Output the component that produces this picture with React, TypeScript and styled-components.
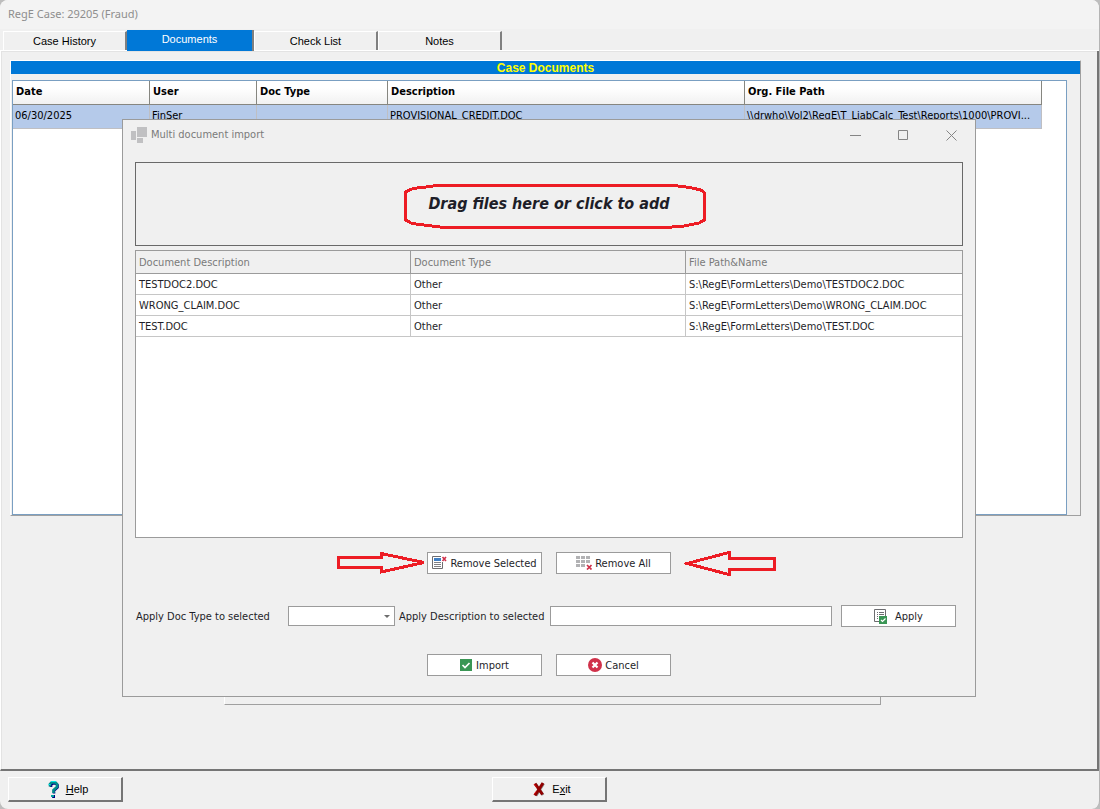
import React from "react";
import styled, { createGlobalStyle, css } from "styled-components";

const ui = `"DejaVu Sans Condensed", "DejaVu Sans", Tahoma, sans-serif`;
const caption = `"Noto Sans", "Open Sans", sans-serif`;
const classic = `"Liberation Sans", Arial, sans-serif`;

const GlobalStyle = createGlobalStyle`
  *, *::before, *::after { box-sizing: border-box; }
  body { margin: 0; background: #bdbdbd; font-family: ${ui}; font-size: 11px; color: #000; }
  button, input, select { font: inherit; color: inherit; margin: 0; }
`;

const Window = styled.div`
  position: relative;
  display: flex;
  flex-direction: column;
  min-height: 100vh;
  background: #f0f0f0;
  border-right: 1px solid #b4b4b4;
  border-radius: 8px;
  overflow: hidden;
`;

const TitleBar = styled.header`
  height: 29px;
  padding: 0 8px;
  background: #f3f3f3;
  font: 11px/28px ${caption};
  color: #8e8e8e;
`;

const Tabs = styled.nav`
  display: flex;
  align-items: flex-end;
  height: 22px;
  padding-left: 3px;
  border-bottom: 1px solid #fff;
`;

const Tab = styled.button<{ $active?: boolean }>`
  width: 124px;
  height: 19px;
  padding: 0;
  border: 0;
  border-top: 1px solid #fff;
  border-left: 1px solid #fff;
  border-right: 2px solid #808080;
  background: #f0f0f0;
  font: 11px/17px ${classic};
  ${(p) =>
    p.$active &&
    css`
      width: 127px;
      height: 21px;
      border-top: 0;
      border-left: 0;
      background: #0078d7;
      color: #fff;
      margin-bottom: -1px;
      padding-bottom: 3px;
    `}
`;

const Page = styled.main`
  flex: 1;
  padding: 9px 16px 20px 9px;
  border-left: 1px solid #fff;
  border-right: 2px solid #757575;
  border-bottom: 2px solid #757575;
  box-shadow: inset 1px 1px #e3e3e3;
`;

const DocumentsPanel = styled.section`
  border: 1px solid #a0a0a0;
  border-top-color: #fff;
  border-left-color: #fff;
`;

const PanelTitle = styled.h1`
  height: 13px;
  margin: 0 0 6px;
  background: #0078d7;
  color: #ff0;
  text-align: center;
  font: bold 12px/15px ${classic};
`;

const GridFrame = styled.div`
  min-height: 435px;
  margin: 0 13px 0 1px;
  border: 1px solid #7a9fc2;
  background: #fff;
`;

const CaseTable = styled.table`
  width: calc(100% - 24px);
  table-layout: fixed;
  border-collapse: separate;
  border-spacing: 0;

  th, td {
    overflow: hidden;
    text-align: left;
    text-overflow: ellipsis;
    white-space: nowrap;
    padding: 0 2px;
  }
  th {
    height: 24px;
    padding: 0 3px 3px;
    border-right: 1px solid #868680;
    border-bottom: 1px solid #868680;
    background: linear-gradient(#fff 30%, #f1f1f1);
  }
  td {
    height: 24px;
    padding-bottom: 2px;
    border-right: 1px solid #bfbfc3;
    border-bottom: 1px solid #bfbfc3;
    background: #b5caea;
  }
`;

const LowerArea = styled.div`
  padding-left: 13px;
`;

const LowerPanel = styled.section`
  width: 657px;
  max-width: 100%;
  height: 184px;
  margin: 5px auto 0;
  border: 1px solid #a0a0a0;
  border-top-color: #fff;
  border-left-color: #fff;
`;

const Footer = styled.footer`
  display: grid;
  grid-template-columns: 1fr auto 1fr;
  padding: 6px 8px 7px;
`;

const BevelButton = styled.button`
  display: flex;
  align-items: center;
  justify-content: center;
  gap: 7px;
  width: 115px;
  height: 25px;
  padding: 0 0 0 6px;
  border: 1px solid #fff;
  border-right: 2px solid #757575;
  border-bottom: 2px solid #757575;
  background: #f0f0f0;
  font: 11px/16px ${classic};
`;

const Overlay = styled.div`
  position: absolute;
  top: 119px;
  left: 122px;
  right: 123px;
`;

const Dialog = styled.div`
  padding: 0 12px 20px;
  border: 1px solid #9b9b9b;
  background: #f0f0f0;
  color: #1e1e28;
`;

const DialogBar = styled.div`
  display: flex;
  align-items: center;
  height: 30px;
  margin: 0 -12px 12px;
  padding-left: 8px;
  color: #7a7a7a;
`;

const DialogTitle = styled.h2`
  flex: 1;
  margin: 0 0 0 4px;
  font: 11px/16px ${ui};
`;

const CaptionButton = styled.button`
  display: grid;
  place-items: center;
  width: 48px;
  height: 28px;
  padding: 0;
  border: 0;
  background: none;
`;

const DropZone = styled.button`
  display: grid;
  place-items: center;
  width: 100%;
  height: 84px;
  padding: 0;
  border: 1px solid #696969;
  background: #f0f0f0;
  font: italic bold 16px/22px ${ui};
`;

const Circled = styled.span`
  position: relative;

  svg {
    position: absolute;
    top: 50%;
    left: 50%;
    transform: translate(-145px, -20px);
  }
`;

const ImportGrid = styled.div`
  height: 288px;
  margin-top: 4px;
  border: 1px solid #9b9b9b;
  background: #fff;
`;

const ImportTable = styled.table`
  width: 100%;
  table-layout: fixed;
  border-collapse: separate;
  border-spacing: 0;

  th, td {
    height: 21px;
    padding: 0 3px;
    text-align: left;
    font-weight: normal;
    white-space: nowrap;
    border-right: 1px solid #c6c6c6;
    border-bottom: 1px solid #c6c6c6;
  }
  th {
    height: 23px;
    border-color: #9b9b9b;
    background: #f0f0f0;
    color: #7a7a7a;
  }
  th:last-child, td:last-child { border-right: 0; }
`;

const RemoveRow = styled.div`
  display: grid;
  grid-template-columns: 1fr auto 1fr;
  align-items: center;
  margin-top: 12px;

  > :first-child { justify-self: end; margin-right: 1px; }
  > :last-child { margin-left: 13px; }
`;

const ButtonPair = styled.div`
  display: flex;
  justify-content: center;
  gap: 14px;
`;

const FlatButton = styled.button<{ $gap?: number }>`
  display: flex;
  flex: none;
  align-items: center;
  justify-content: center;
  gap: ${(p) => p.$gap ?? 3}px;
  width: 115px;
  height: 22px;
  padding: 0;
  border: 1px solid #9b9b9b;
  background: #fff;
  white-space: nowrap;
`;

const ApplyRow = styled.div`
  display: grid;
  grid-template-columns: 152px 107px 155px 1fr 115px;
  align-items: center;
  margin: 29px 7px 27px 1px;
`;

const TypeSelect = styled.div`
  display: grid;
  align-items: center;

  > * { grid-area: 1 / 1; }
  svg { justify-self: end; margin-right: 5px; pointer-events: none; }
`;

const Select = styled.select`
  width: 100%;
  height: 20px;
  border: 1px solid #9b9b9b;
  border-radius: 0;
  background: #fff;
  appearance: none;
`;

const FieldLabel = styled.label`
  white-space: nowrap;
`;

const DescriptionLabel = styled(FieldLabel)`
  padding-left: 4px;
`;

const TextInput = styled.input`
  width: auto;
  min-width: 0;
  height: 20px;
  margin-right: 9px;
  padding: 0 3px;
  border: 1px solid #9b9b9b;
  background: #fff;
`;

const caseColumns = ["Date", "User", "Doc Type", "Description", "Org. File Path"];
const files = ["TESTDOC2.DOC", "WRONG_CLAIM.DOC", "TEST.DOC"];

const FormIcon = () => (
  <svg width="16" height="16" viewBox="0 0 16 16" fill="#c0c0c2" aria-hidden>
    <path d="M0 4h5v9H0zM6 0h10v10H6zM6 11h6v5H6z" />
  </svg>
);

const RemoveSelectedIcon = () => (
  <svg width="15" height="14" viewBox="0 0 15 14" fill="none" aria-hidden>
    <path d="M9 .5H.5v12H10.500V6" stroke="#6d6d70" />
    <path d="M2 2h7v3H2z" fill="#3f7fc4" />
    <path d="M2 6.500h7M2 8.500h7M2 10.500h7" stroke="#808084" />
    <path d="M10.500 1l3.500 4M14 1l-3.500 4" stroke="#d0314a" strokeWidth="1.600" />
  </svg>
);

const RemoveAllIcon = () => (
  <svg width="16" height="14" viewBox="0 0 16 14" aria-hidden>
    <path
      d="M0 0h4v3H0zM5 0h4v3H5zM10 0h4v3h-4zM0 4h4v3H0zM5 4h4v3H5zM10 4h4v3h-4zM0 8h4v3H0zM5 8h4v3H5z"
      fill="#b2b2b4"
    />
    <path d="M11 9l4.500 4.500M15.500 9L11 13.500" stroke="#d0314a" strokeWidth="1.700" />
  </svg>
);

const ApplyIcon = () => (
  <svg width="13" height="15" viewBox="0 0 13 15" fill="none" aria-hidden>
    <path d="M5 12.500H.5V.5h11V7" stroke="#6d6d70" />
    <path d="M3 3.500h1M5 3.500h5M3 5.500h1M5 5.500h5M3 7.500h1M3 9.500h1" stroke="#6d6d70" />
    <path d="M5 7h8v8H5z" fill="#3a9655" />
    <path d="M7 11l1.500 1.500L11.500 9.500" stroke="#fff" strokeWidth="1.200" />
  </svg>
);

const ImportIcon = () => (
  <svg width="12" height="12" viewBox="0 0 12 12" fill="none" aria-hidden>
    <path d="M0 0h12v12H0z" fill="#3a9655" />
    <path d="M2.500 6l2.500 2.500L9.500 4" stroke="#fff" strokeWidth="1.700" />
  </svg>
);

const CancelIcon = () => (
  <svg width="14" height="14" viewBox="0 0 14 14" aria-hidden>
    <circle cx="7" cy="7" r="7" fill="#d0314a" />
    <path d="M4.500 4.500l5 5M9.500 4.500l-5 5" stroke="#fff" strokeWidth="2.200" />
  </svg>
);

const HelpIcon = () => (
  <svg width="11" height="17" viewBox="0 0 11 17" fill="none" aria-hidden>
    <path d="M3 6V4L4.500 2.500h3.500L9.500 4v2.500L6 9.500v3" stroke="#000080" strokeWidth="2.600" />
    <path d="M2 5.500V3L3.500 1.500h4L9 3v3L5.500 9v3" stroke="#008c8c" strokeWidth="2.600" />
    <path d="M3 .5h5M.5 3.500h2" stroke="#00e5e5" />
    <path d="M5 14h2v3H4z" fill="#000080" />
    <path d="M3 14h3v2H3z" fill="#00a0a0" />
  </svg>
);

const ExitIcon = () => (
  <svg width="12" height="15" viewBox="0 0 12 15" fill="none" aria-hidden>
    <path d="M2.500 2l7.500 11M10.500 1.500L3 13.500" stroke="#8a8a8a" strokeWidth="3" />
    <path d="M2 1.500l7.500 11M10 1L2 13.500" stroke="#900000" strokeWidth="3" />
    <path d="M1 2l2.500 3.500M1 12.500L3 9.500" stroke="#e01010" />
  </svg>
);

const RingMark = () => (
  <svg width="303" height="46" viewBox="0 0 303 46" fill="none" shapeRendering="crispEdges" aria-hidden>
    <path
      d="M33 1.500H270L286 3.500 297 6 300.500 9V36L295 39 280 42 262 43.500H40L20 41 8 39.500 1.500 36V8L9 4.500 22 3Z"
      stroke="#ed1c24"
      strokeWidth="3"
    />
  </svg>
);

const RightArrow = () => (
  <svg width="89" height="22" viewBox="0 0 89 22" fill="none" shapeRendering="crispEdges" aria-hidden>
    <path d="M1.500 5.500H44V1.500L87 10.500 44 20V15.500H1.500Z" stroke="#ed1c24" strokeWidth="3" />
  </svg>
);

const LeftArrow = () => (
  <svg width="92" height="26" viewBox="0 0 92 26" fill="none" shapeRendering="crispEdges" aria-hidden>
    <path d="M90.500 8.500H45V2.500L3 13.500 45 24.500V19.500H90.500Z" stroke="#ed1c24" strokeWidth="3" />
  </svg>
);

export default function App() {
  return (
    <>
      <GlobalStyle />
      <Window>
        <TitleBar>RegE Case: 29205 (Fraud)</TitleBar>
        <Tabs>
          <Tab>Case History</Tab>
          <Tab $active>Documents</Tab>
          <Tab>Check List</Tab>
          <Tab>Notes</Tab>
        </Tabs>
        <Page>
          <DocumentsPanel>
            <PanelTitle>Case Documents</PanelTitle>
            <GridFrame>
              <CaseTable>
                <colgroup>
                  <col width="137" />
                  <col width="107" />
                  <col width="131" />
                  <col />
                  <col width="297" />
                </colgroup>
                <thead>
                  <tr>
                    {caseColumns.map((name) => (
                      <th key={name}>{name}</th>
                    ))}
                  </tr>
                </thead>
                <tbody>
                  <tr>
                    <td>06/30/2025</td>
                    <td>FinSer</td>
                    <td></td>
                    <td>PROVISIONAL_CREDIT.DOC</td>
                    <td>{"\\\\drwho\\Vol2\\RegE\\T_LiabCalc_Test\\Reports\\1000\\PROVI..."}</td>
                  </tr>
                </tbody>
              </CaseTable>
            </GridFrame>
          </DocumentsPanel>
          <LowerArea>
            <LowerPanel />
          </LowerArea>
        </Page>
        <Footer>
          <BevelButton>
            <HelpIcon />
            <span><u>H</u>elp</span>
          </BevelButton>
          <BevelButton>
            <ExitIcon />
            <span>E<u>x</u>it</span>
          </BevelButton>
        </Footer>

        <Overlay>
          <Dialog role="dialog" aria-label="Multi document import">
            <DialogBar>
              <FormIcon />
              <DialogTitle>Multi document import</DialogTitle>
              <CaptionButton aria-label="Minimize">
                <svg width="11" height="11" stroke="#858585"><path d="M0 5.500h11" /></svg>
              </CaptionButton>
              <CaptionButton aria-label="Maximize">
                <svg width="11" height="11" fill="none" stroke="#858585"><path d="M.5 .5h9v9h-9z" /></svg>
              </CaptionButton>
              <CaptionButton aria-label="Close">
                <svg width="11" height="11" stroke="#858585"><path d="M.5 .5l10 10M10.500 .5l-10 10" /></svg>
              </CaptionButton>
            </DialogBar>
            <DropZone>
              <Circled>
                Drag files here or click to add
                <RingMark />
              </Circled>
            </DropZone>
            <ImportGrid>
              <ImportTable>
                <colgroup>
                  <col width="275" />
                  <col width="275" />
                  <col />
                </colgroup>
                <thead>
                  <tr>
                    <th>Document Description</th>
                    <th>Document Type</th>
                    <th>File Path&amp;Name</th>
                  </tr>
                </thead>
                <tbody>
                  {files.map((file) => (
                    <tr key={file}>
                      <td>{file}</td>
                      <td>Other</td>
                      <td>{`S:\\RegE\\FormLetters\\Demo\\${file}`}</td>
                    </tr>
                  ))}
                </tbody>
              </ImportTable>
            </ImportGrid>
            <RemoveRow>
              <RightArrow />
              <ButtonPair>
                <FlatButton><RemoveSelectedIcon />Remove Selected</FlatButton>
                <FlatButton><RemoveAllIcon />Remove All</FlatButton>
              </ButtonPair>
              <LeftArrow />
            </RemoveRow>
            <ApplyRow>
              <FieldLabel htmlFor="doc-type">Apply Doc Type to selected</FieldLabel>
              <TypeSelect>
                <Select id="doc-type"><option></option></Select>
                <svg width="6" height="3" fill="#6d6d6d" aria-hidden><path d="M0 0h6L3 3z" /></svg>
              </TypeSelect>
              <DescriptionLabel htmlFor="description">Apply Description to selected</DescriptionLabel>
              <TextInput id="description" type="text" />
              <FlatButton $gap={8}><ApplyIcon />Apply</FlatButton>
            </ApplyRow>
            <ButtonPair>
              <FlatButton $gap={4}><ImportIcon />Import</FlatButton>
              <FlatButton><CancelIcon />Cancel</FlatButton>
            </ButtonPair>
          </Dialog>
        </Overlay>
      </Window>
    </>
  );
}
